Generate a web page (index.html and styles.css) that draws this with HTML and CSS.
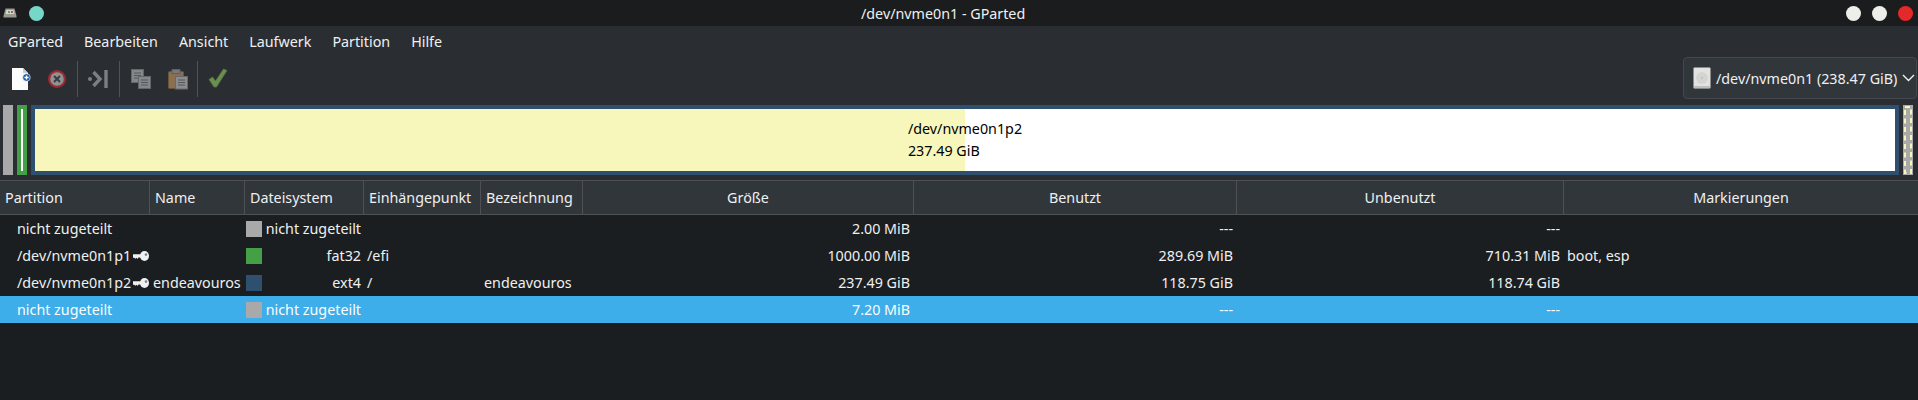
FILE: index.html
```html
<!DOCTYPE html>
<html lang="de">
<head>
<meta charset="utf-8">
<title>/dev/nvme0n1 - GParted</title>
<link rel="stylesheet" href="styles.css">
</head>
<body>
<svg class="defs" width="0" height="0" aria-hidden="true">
  <defs>
    <symbol id="key" viewBox="0 0 16 12">
      <path d="M0 4.200h8v3.400H5.500L4.600 9 3.500 7.700 2.400 8.700 1.200 7.700H0z" fill="#eff0f1"/>
      <ellipse cx="11.500" cy="6" rx="4.500" ry="5" fill="#eff0f1"/>
      <circle cx="13" cy="4.600" r="1.300" fill="#7f8386"/>
    </symbol>
  </defs>
</svg>
<header class="titlebar">
  <div class="title-left">
    <svg class="app-icon" width="14" height="10" viewBox="0 0 14 10"><path d="M2.500.5h9L13.500 8v1.500H.5V8z" fill="#9a9a94"/><path d="M3.500 2h7l.8 4H2.700z" fill="#d9d8cf"/><path d="M5 3h2v2H5z" fill="#6f9c5b"/><path d="M8 3h2v2H8z" fill="#b6564a"/></svg>
    <span class="dot-teal"></span>
  </div>
  <div class="title-text">/dev/nvme0n1 - GParted</div>
  <div class="title-buttons">
    <span class="wbtn"></span><span class="wbtn"></span><span class="wbtn wbtn-close"></span>
  </div>
</header>
<nav class="menubar">
  <span>GParted</span><span>Bearbeiten</span><span>Ansicht</span><span>Laufwerk</span><span>Partition</span><span>Hilfe</span>
</nav>
<div class="toolbar">
  <div class="tools">
    <svg class="tool tool-new" width="20" height="24" viewBox="0 0 20 24">
      <path d="M1 1h11l5 5v17H1z" fill="#fcfcfc"/><path d="M12 1v5h5z" fill="#c9cbcc"/>
      <circle cx="15.500" cy="10.500" r="3.800" fill="#1f5fa8" stroke="#fff" stroke-width=".6"/><path d="M13.500 10.500h4M15.500 8.500v4" stroke="#fff" stroke-width="1.300"/>
    </svg>
    <svg class="tool tool-cancel" width="20" height="20" viewBox="0 0 20 20">
      <circle cx="10" cy="10" r="9" fill="#9c2a30"/><circle cx="10" cy="10" r="6.800" fill="#8f9193"/>
      <path d="M7 7l6 6M13 7l-6 6" stroke="#3a3d40" stroke-width="2"/>
    </svg>
    <i class="sep sep-a"></i>
    <svg class="tool tool-apply" width="20" height="20" viewBox="0 0 20 20">
      <path d="M5.500 3l6.500 7-6.500 7" fill="none" stroke="#7c7f81" stroke-width="3.400"/>
      <path d="M18 1v18" stroke="#7c7f81" stroke-width="3.400"/>
      <circle cx="2" cy="10" r="2" fill="#7c7f81"/>
    </svg>
    <i class="sep sep-b"></i>
    <svg class="tool tool-copy" width="20" height="20" viewBox="0 0 20 20">
      <rect x=".5" y=".5" width="12" height="13" fill="#85888a" stroke="#63666a"/><path d="M3 4h7M3 6.500h7M3 9h7" stroke="#55585a"/>
      <rect x="7.500" y="7.500" width="12" height="12" fill="#85888a" stroke="#63666a"/><path d="M10 11h7M10 13.500h7M10 16h7" stroke="#55585a"/>
    </svg>
    <svg class="tool tool-paste" width="20" height="22" viewBox="0 0 20 22">
      <rect x=".5" y="3.500" width="15" height="17" rx="1" fill="#8a7050" stroke="#6b5538"/>
      <rect x="4" y="1.500" width="8" height="4" fill="#77797b" stroke="#5c5e60"/>
      <rect x="7.500" y="8.500" width="12" height="12.500" fill="#8a8c8e" stroke="#66696c"/><path d="M10 12h7M10 14.500h7M10 17h7" stroke="#55585a"/>
    </svg>
    <i class="sep sep-c"></i>
    <svg class="tool tool-check" width="20" height="20" viewBox="0 0 20 20">
      <path d="M1 11.500l3.500-2.500 3 4L15.500 1 19 2.500 8.500 19h-2.500z" fill="#6b8f50" stroke="#55743f" stroke-width=".8"/>
    </svg>
  </div>
  <div class="combo">
    <svg width="18" height="22" viewBox="0 0 18 22"><rect x=".5" y=".5" width="17" height="21" rx="1" fill="#e2e2e0"/><circle cx="9" cy="11" r="6" fill="#d4d4d2"/><circle cx="9" cy="11" r="1" fill="#bcbcba"/><path d="M.5 20h17" stroke="#9a9a98"/></svg>
    <span class="combo-text">/dev/nvme0n1 (238.47 GiB)</span>
    <svg width="13" height="8" viewBox="0 0 13 8"><path d="M1 1l5.500 5.500L12 1" fill="none" stroke="#eff0f1" stroke-width="1.400"/></svg>
  </div>
</div>
<section class="map">
  <div class="seg seg-grey"></div>
  <div class="seg seg-green"><i></i></div>
  <div class="seg seg-main">
    <div class="seg-inner"><div class="seg-label">/dev/nvme0n1p2<br>237.49 GiB</div></div>
  </div>
  <div class="seg seg-end">
    <svg width="10" height="70" viewBox="0 0 10 70"><rect x="2" y="2" width="6" height="66" fill="none" stroke="#f7f7bc" stroke-width="2" stroke-dasharray="5 3.500"/></svg>
  </div>
</section>
<section class="table">
  <div class="row head">
    <div class="c">Partition</div><div class="c">Name</div><div class="c">Dateisystem</div><div class="c">Einhängepunkt</div><div class="c">Bezeichnung</div>
    <div class="c mid">Größe</div><div class="c mid">Benutzt</div><div class="c mid">Unbenutzt</div><div class="c mid last">Markierungen</div>
  </div>
  <div class="row">
    <div class="c part">nicht zugeteilt</div><div class="c"></div>
    <div class="c fs"><i class="sw sw-grey"></i><span>nicht zugeteilt</span></div>
    <div class="c mnt"></div><div class="c lab"></div>
    <div class="c num">2.00 MiB</div><div class="c num">---</div><div class="c num">---</div><div class="c flg"></div>
  </div>
  <div class="row">
    <div class="c part">/dev/nvme0n1p1<svg class="key" width="16" height="12"><use href="#key"/></svg></div><div class="c"></div>
    <div class="c fs"><i class="sw sw-green"></i><span>fat32</span></div>
    <div class="c mnt">/efi</div><div class="c lab"></div>
    <div class="c num">1000.00 MiB</div><div class="c num">289.69 MiB</div><div class="c num">710.31 MiB</div><div class="c flg">boot, esp</div>
  </div>
  <div class="row">
    <div class="c part">/dev/nvme0n1p2<svg class="key" width="16" height="12"><use href="#key"/></svg></div><div class="c name">endeavouros</div>
    <div class="c fs"><i class="sw sw-blue"></i><span>ext4</span></div>
    <div class="c mnt">/</div><div class="c lab">endeavouros</div>
    <div class="c num">237.49 GiB</div><div class="c num">118.75 GiB</div><div class="c num">118.74 GiB</div><div class="c flg"></div>
  </div>
  <div class="row sel">
    <div class="c part">nicht zugeteilt</div><div class="c"></div>
    <div class="c fs"><i class="sw sw-grey"></i><span>nicht zugeteilt</span></div>
    <div class="c mnt"></div><div class="c lab"></div>
    <div class="c num">7.20 MiB</div><div class="c num">---</div><div class="c num">---</div><div class="c flg"></div>
  </div>
</section>
</body>
</html>
```

FILE: styles.css
```css
* { box-sizing: border-box; }
html, body { margin: 0; height: 100%; }
body {
  background: #1b1e20;
  color: #eff0f1;
  font-family: "Noto Sans", sans-serif;
  font-size: 14.3px;
  overflow: hidden;
}
.defs { display: block; height: 0; }

.titlebar {
  height: 26px;
  background: #1a1c1e;
  display: grid;
  grid-template-columns: 861px auto 1fr;
  align-items: center;
}
.title-left { display: flex; align-items: center; padding-left: 3px; gap: 12px; }
.app-icon { display: block; }
.dot-teal { width: 15px; height: 15px; border-radius: 50%; background: #76d6c8; }
.title-text { color: #eff0f1; }
.title-buttons { display: flex; justify-content: flex-end; gap: 11px; padding-right: 5px; }
.wbtn { width: 15px; height: 15px; border-radius: 50%; background: #eeeeea; }
.wbtn-close { background: #e5282a; }

.menubar {
  height: 30px;
  background: #2a2e32;
  display: flex;
  align-items: center;
  gap: 21px;
  padding-left: 8px;
  color: #eff0f1;
}

.toolbar {
  height: 49px;
  background: #2a2e32;
  display: flex;
  justify-content: space-between;
  padding-right: 1px;
}
.tools { display: flex; align-items: flex-start; padding-left: 11px; }
.tool { display: block; flex: none; }
.tool-new { margin-top: 11px; }
.tool-cancel { margin-top: 13px; margin-left: 16px; }
.sep { display: block; width: 1px; height: 36px; margin-top: 5px; background: #4f5357; flex: none; }
.sep-a { margin-left: 10px; }
.tool-apply { margin-top: 13px; margin-left: 10px; }
.sep-b { margin-left: 11px; }
.tool-copy { margin-top: 13px; margin-left: 11px; }
.tool-paste { margin-top: 12px; margin-left: 17px; }
.sep-c { margin-left: 9px; }
.tool-check { margin-top: 12px; margin-left: 10px; }

.combo {
  width: 234px;
  height: 42px;
  margin-top: 1px;
  background: #31363b;
  border: 1px solid #43484d;
  border-radius: 4px;
  display: flex;
  align-items: center;
  padding-left: 9px;
  gap: 5px;
}
.combo-text { white-space: nowrap; }
.combo svg:last-child { margin-left: 0; flex: none; }

.map {
  height: 75px;
  background: #2a2e32;
  padding: 0 5px 5px 3px;
  display: flex;
  gap: 4px;
}
.seg { height: 70px; flex: none; }
.seg-grey { width: 10px; background: #a9a9a9; }
.seg-green { width: 10px; background: #43a047; padding: 4px; }
.seg-green i { display: block; height: 100%; background: #fff; }
.seg-main { width: 1868px; background: #2f4f6f; padding: 4px; }
.seg-inner {
  height: 100%;
  background: linear-gradient(to right, #f7f7bc 930px, #fff 930px);
  color: #000;
  display: flex;
  align-items: center;
  justify-content: center;
  line-height: 22px;
}
.seg-end { width: 10px; background: #a9a9a9; }
.seg-end svg { display: block; }

.table { background: #1b1e20; }
.row {
  display: grid;
  grid-template-columns: 150px 95px 119px 117px 102px 331px 323px 327px 1fr;
  height: 27px;
  align-items: center;
  white-space: nowrap;
}
.head {
  height: 35px;
  background: #31363b;
  border-top: 1px solid #4d5154;
  border-bottom: 1px solid #4d5154;
  align-items: stretch;
}
.head .c {
  display: flex;
  align-items: center;
  padding-left: 5px;
  border-right: 1px solid #4d5154;
}
.head .mid { justify-content: center; padding-left: 0; }
.head .last { border-right: 0; }
.part { padding: 0 1px 0 17px; display: flex; align-items: center; justify-content: space-between; }
.key { flex: none; }
.name { padding-left: 3px; }
.fs { display: flex; align-items: center; justify-content: space-between; padding: 0 3px 0 1px; }
.sw { display: block; width: 16px; height: 16px; flex: none; }
.sw-grey { background: #a9a9a9; }
.sw-green { background: #43a047; }
.sw-blue { background: #2f4f6f; }
.mnt { padding-left: 3px; }
.lab { padding-left: 3px; }
.num { text-align: right; padding-right: 4px; }
.flg { padding-left: 3px; }
.sel { background: #3daee9; color: #fcfcfc; }
```
